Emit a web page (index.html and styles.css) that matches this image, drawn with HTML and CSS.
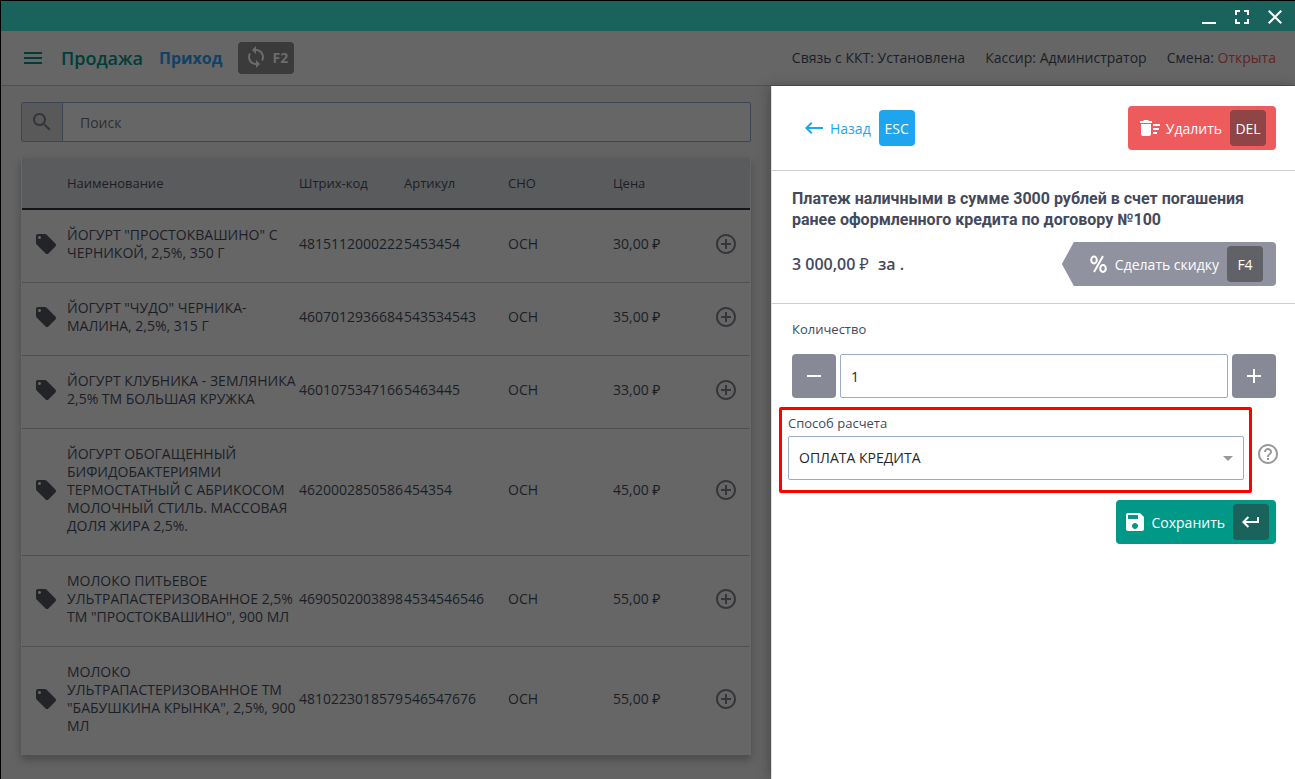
FILE: index.html
```html
<!DOCTYPE html>
<html lang="ru">
<head>
<meta charset="utf-8">
<title>Продажа</title>
<link rel="stylesheet" href="styles.css">
</head>
<body>
<svg class="sprite" aria-hidden="true">
  <symbol id="tag" viewBox="0 0 24 24"><path d="M21.41 11.58l-9-9C12.05 2.22 11.55 2 11 2H4c-1.1 0-2 .9-2 2v7c0 .55.22 1.05.59 1.42l9 9c.36.36.86.58 1.41.58.55 0 1.05-.22 1.41-.59l7-7c.37-.36.59-.86.59-1.41 0-.55-.23-1.06-.59-1.42zM5.500 7C4.670 7 4 6.330 4 5.500S4.670 4 5.500 4 7 4.670 7 5.500 6.330 7 5.500 7z"/></symbol>
  <symbol id="add" viewBox="0 0 24 24"><path d="M13 7h-2v4H7v2h4v4h2v-4h4v-2h-4V7zm-1-5C6.480 2 2 6.480 2 12s4.480 10 10 10 10-4.480 10-10S17.520 2 12 2zm0 18c-4.410 0-8-3.590-8-8s3.590-8 8-8 8 3.590 8 8-3.590 8-8 8z"/></symbol>
</svg>
<div class="titlebar">
  <button class="win-btn" aria-label="Свернуть"><svg class="glyph" viewBox="0 0 14 14"><path d="M0 12h14v2H0z"/></svg></button>
  <button class="win-btn" aria-label="Развернуть"><svg class="glyph" viewBox="0 0 14 14"><path d="M0 0h5v2H2v3H0zM9 0h5v5h-2V2H9zM0 9h2v3h3v2H0zM12 9h2v5H9v-2h3z"/></svg></button>
  <button class="win-btn" aria-label="Закрыть"><svg class="glyph" viewBox="0 0 14 14"><path d="M14 1.400L12.600 0 7 5.600 1.400 0 0 1.400 5.600 7 0 12.600 1.400 14 7 8.400l5.600 5.600 1.400-1.400L8.400 7z"/></svg></button>
</div>
<header class="topbar">
  <button class="menu" aria-label="Меню"><svg class="icon" viewBox="0 0 24 24"><path d="M3 18h18v-2H3v2zm0-5h18v-2H3v2zm0-7v2h18V6H3z"/></svg></button>
  <h1 class="page-name">Продажа</h1>
  <span class="mode">Приход</span>
  <button class="sync"><svg class="icon" viewBox="0 0 24 24"><path d="M12 4V1L8 5l4 4V6c3.310 0 6 2.690 6 6 0 1.010-.25 1.970-.7 2.800l1.460 1.460C19.540 15.030 20 13.570 20 12c0-4.420-3.580-8-8-8zm0 14c-3.310 0-6-2.690-6-6 0-1.010.25-1.970.7-2.800L5.240 7.740C4.460 8.970 4 10.430 4 12c0 4.420 3.580 8 8 8v3l4-4-4-4v3z"/></svg><span>F2</span></button>
  <div class="status">
    <span>Связь с ККТ: Установлена</span>
    <span>Кассир: Администратор</span>
    <span>Смена: <span class="open">Открыта</span></span>
  </div>
</header>
<div class="workspace">
  <main class="catalog">
    <div class="search">
      <label class="search-icon" for="search" aria-label="Поиск"><svg class="icon" viewBox="0 0 24 24"><path d="M15.500 14h-.79l-.28-.27C15.410 12.590 16 11.110 16 9.500 16 5.910 13.090 3 9.500 3S3 5.910 3 9.500 5.910 16 9.500 16c1.610 0 3.090-.59 4.230-1.570l.27.28v.79l5 4.990L20.490 19l-4.990-5zm-6 0C7.010 14 5 11.990 5 9.500S7.010 5 9.500 5 14 7.010 14 9.500 11.990 14 9.500 14z"/></svg></label>
      <input class="search-input" id="search" type="text" placeholder="Поиск">
    </div>
    <table class="goods">
      <colgroup><col class="c-tag"><col><col class="c-data"><col class="c-art"><col class="c-data"><col class="c-price"><col class="c-add"></colgroup>
      <thead><tr><th></th><th>Наименование</th><th>Штрих-код</th><th>Артикул</th><th>СНО</th><th>Цена</th><th></th></tr></thead>
      <tbody>
        <tr><td class="tag"><svg class="icon"><use href="#tag"/></svg></td><td>ЙОГУРТ "ПРОСТОКВАШИНО" С ЧЕРНИКОЙ, 2,5%, 350 Г</td><td>4815112000222</td><td>5453454</td><td>ОСН</td><td>30,00 ₽</td><td><button class="add" aria-label="Добавить"><svg class="icon"><use href="#add"/></svg></button></td></tr>
        <tr><td class="tag"><svg class="icon"><use href="#tag"/></svg></td><td>ЙОГУРТ "ЧУДО" ЧЕРНИКА-МАЛИНА, 2,5%, 315 Г</td><td>4607012936684</td><td>543534543</td><td>ОСН</td><td>35,00 ₽</td><td><button class="add" aria-label="Добавить"><svg class="icon"><use href="#add"/></svg></button></td></tr>
        <tr><td class="tag"><svg class="icon"><use href="#tag"/></svg></td><td>ЙОГУРТ КЛУБНИКА - ЗЕМЛЯНИКА 2,5% ТМ БОЛЬШАЯ КРУЖКА</td><td>4601075347166</td><td>5463445</td><td>ОСН</td><td>33,00 ₽</td><td><button class="add" aria-label="Добавить"><svg class="icon"><use href="#add"/></svg></button></td></tr>
        <tr><td class="tag"><svg class="icon"><use href="#tag"/></svg></td><td>ЙОГУРТ ОБОГАЩЕННЫЙ БИФИДОБАКТЕРИЯМИ ТЕРМОСТАТНЫЙ С АБРИКОСОМ МОЛОЧНЫЙ СТИЛЬ. МАССОВАЯ ДОЛЯ ЖИРА 2,5%.</td><td>4620002850586</td><td>454354</td><td>ОСН</td><td>45,00 ₽</td><td><button class="add" aria-label="Добавить"><svg class="icon"><use href="#add"/></svg></button></td></tr>
        <tr><td class="tag"><svg class="icon"><use href="#tag"/></svg></td><td>МОЛОКО ПИТЬЕВОЕ УЛЬТРАПАСТЕРИЗОВАННОЕ 2,5% ТМ "ПРОСТОКВАШИНО", 900 МЛ</td><td>4690502003898</td><td>4534546546</td><td>ОСН</td><td>55,00 ₽</td><td><button class="add" aria-label="Добавить"><svg class="icon"><use href="#add"/></svg></button></td></tr>
        <tr><td class="tag"><svg class="icon"><use href="#tag"/></svg></td><td>МОЛОКО УЛЬТРАПАСТЕРИЗОВАННОЕ ТМ "БАБУШКИНА КРЫНКА", 2,5%, 900 МЛ</td><td>4810223018579</td><td>546547676</td><td>ОСН</td><td>55,00 ₽</td><td><button class="add" aria-label="Добавить"><svg class="icon"><use href="#add"/></svg></button></td></tr>
      </tbody>
    </table>
  </main>
  <aside class="drawer">
    <div class="actions">
      <button class="btn back"><svg class="icon" viewBox="0 0 24 24"><path d="M21 11H6.830l3.580-3.590L9 6l-6 6 6 6 1.410-1.410L6.830 13H21z"/></svg><span>Назад</span><kbd class="key">ESC</kbd></button>
      <button class="btn delete"><svg class="icon" viewBox="0 0 24 24"><path d="M15 16h4v2h-4zM15 8h7v2h-7zM15 12h6v2h-6zM3 18a2 2 0 0 0 2 2h6a2 2 0 0 0 2-2V8H3zM14 5h-3l-1-1H6L5 5H2v2h12z"/></svg><span>Удалить</span><kbd class="key">DEL</kbd></button>
    </div>
    <section class="item">
      <h2 class="item-name">Платеж наличными в сумме 3000 рублей в счет погашения ранее оформленного кредита по договору №100</h2>
      <div class="price-row">
        <p class="price"><span>3 000,00 <span class="ruble">₽</span></span><span>за .</span></p>
        <button class="btn discount"><svg class="percent" viewBox="0 0 17 20"><g fill="none" stroke="currentColor" stroke-width="2"><ellipse cx="4" cy="6" rx="2.800" ry="3.400"/><ellipse cx="13" cy="14.500" rx="2.800" ry="3.400"/><path d="M13 2L4 18"/></g></svg><span>Сделать скидку</span><kbd class="key">F4</kbd></button>
      </div>
    </section>
    <form class="form">
      <label class="label" for="qty">Количество</label>
      <div class="qty-row">
        <button class="step" type="button" aria-label="Меньше"><svg class="glyph" viewBox="0 0 14 14"><path d="M0 6h14v2H0z"/></svg></button>
        <input class="field qty" id="qty" type="text" value="1">
        <button class="step" type="button" aria-label="Больше"><svg class="glyph" viewBox="0 0 14 14"><path d="M6 0h2v6h6v2H8v6H6V8H0V6h6z"/></svg></button>
      </div>
      <div class="method-row">
        <div class="method">
          <label class="label" for="method">Способ расчета</label>
          <div class="select-wrap">
            <select class="field select" id="method"><option>ОПЛАТА КРЕДИТА</option></select>
            <svg class="caret" viewBox="0 0 10 5"><path d="M0 0h10L5 5z"/></svg>
          </div>
        </div>
        <button class="help" type="button" aria-label="Справка"><svg class="icon" viewBox="0 0 24 24"><path d="M11 18h2v-2h-2v2zm1-16C6.480 2 2 6.480 2 12s4.480 10 10 10 10-4.480 10-10S17.520 2 12 2zm0 18c-4.410 0-8-3.590-8-8s3.590-8 8-8 8 3.590 8 8-3.590 8-8 8zm0-14c-2.210 0-4 1.790-4 4h2c0-1.100.9-2 2-2s2 .9 2 2c0 2-3 1.750-3 5h2c0-2.250 3-2.500 3-5 0-2.210-1.790-4-4-4z"/></svg></button>
      </div>
      <button class="btn save" type="button"><svg class="icon" viewBox="0 0 24 24"><path d="M17 3H5c-1.110 0-2 .9-2 2v14c0 1.100.89 2 2 2h14c1.100 0 2-.9 2-2V7l-4-4zm-5 16c-1.660 0-3-1.340-3-3s1.340-3 3-3 3 1.340 3 3-1.340 3-3 3zm3-10H5V5h10v4z"/></svg><span>Сохранить</span><kbd class="key"><svg class="return" viewBox="0 0 18 12"><path d="M15 1v4H3.800l3.300-3.300L5.700.3 0 6l5.700 5.700 1.400-1.400L3.800 7H17V1z"/></svg></kbd></button>
    </form>
  </aside>
</div>
</body>
</html>
```
FILE: styles.css
```css
* { box-sizing: border-box; }
body {
  margin: 0;
  min-height: 100vh;
  display: flex;
  flex-direction: column;
  border-top: 1px solid #000;
  border-left: 1px solid #000;
  background: #636363;
  color: #1c1e26;
  font: 14px/18px "Open Sans", "Noto Sans", sans-serif;
}
button, input, select { font: inherit; color: inherit; margin: 0; }
button { border: 0; padding: 0; background: none; display: inline-flex; align-items: center; justify-content: center; cursor: pointer; }
svg { fill: currentColor; flex: none; display: block; }
.sprite { position: absolute; width: 0; height: 0; }
.icon { width: 24px; height: 24px; }
.glyph { width: 14px; height: 14px; }

.titlebar { height: 30px; display: flex; justify-content: flex-end; align-items: center; gap: 5px; padding: 2px 6px 0 0; background: #1a635c; color: #fff; }
.win-btn { width: 28px; height: 28px; }

.topbar { height: 55px; display: flex; align-items: center; padding: 0 19px 0 20px; background: #666; border-bottom: 1px solid #505050; }
.menu { color: #003d36; }
.page-name { margin: 0 16px; font-size: 18px; font-weight: 600; line-height: 24px; color: #003d36; }
.mode { margin-right: 16px; font-size: 16px; font-weight: 700; color: #0f4265; }
.sync { width: 56px; height: 32px; gap: 4px; border-radius: 4px; background: #3b3b3b; color: #6c6c6c; font-weight: 700; }
.sync .icon { margin-bottom: 2px; }
.status { margin-left: auto; display: flex; gap: 20px; }
.open { color: #5f2424; }

.workspace { flex: 1; display: flex; }
.catalog { flex: 1; min-width: 0; padding: 16px 20px 23px; }
.search { display: flex; height: 40px; margin-bottom: 16px; border: 1px solid #3d4454; border-radius: 2px; background: #666; }
.search-icon { width: 41px; display: flex; align-items: center; justify-content: center; background: #595959; border-right: 1px solid #3d4454; color: #35353b; }
.search-input { flex: 1; min-width: 0; border: 0; padding: 2px 17px 0; background: none; }
.search-input::placeholder { color: #2e2e2e; opacity: 1; }

.goods { width: 100%; table-layout: fixed; border-collapse: separate; border-spacing: 0; padding: 0 1px; background: #666; box-shadow: 0 4px 8px rgba(0, 0, 0, .25); }
.c-tag { width: 45px; }
.c-data { width: 105px; }
.c-art { width: 104px; }
.c-price { width: 90px; }
.c-add { width: 47px; }
.goods th { height: 52px; padding: 0; text-align: left; font-size: 13px; font-weight: 400; background: #5a5b5d; border-bottom: 2px solid #14151b; }
.goods td { padding: 16px 0 20px; vertical-align: middle; border-bottom: 1px solid #505050; white-space: nowrap; }
.goods td:nth-child(2) { white-space: normal; }
.goods .tag { padding-left: 12px; color: #232428; }
.add { display: flex; margin-left: 11px; color: #35353b; }

.drawer { width: 524px; padding-bottom: 24px; background: #fff; border-left: 1px solid #ddd; color: #444a5c; box-shadow: -2px 0 12px rgba(0, 0, 0, .25); }
.btn { height: 44px; border-radius: 4px; color: #fff; }
.btn span { padding-top: 2px; }
.key { min-width: 36px; height: 36px; display: flex; align-items: center; justify-content: center; border-radius: 4px; font: inherit; padding-top: 2px; }
.actions { display: flex; justify-content: space-between; padding: 20px 19px 20px 20px; border-bottom: 1px solid #ccc; }
.back { padding-left: 10px; color: #1ea5ee; }
.back span { margin: 0 8px 0 4px; }
.back .key { background: #1ea5ee; color: #fff; }
.delete { padding: 0 10px; background: #ed5b5d; }
.delete span { margin: 0 8px 0 4px; }
.delete .key { background: #8f4446; }

.item { padding: 17px 19px 17px 20px; border-bottom: 1px solid #ccc; }
.item-name { margin: 0 0 12px; font: 700 16px/21px Roboto, sans-serif; }
.price-row { display: flex; justify-content: space-between; align-items: center; }
.price { margin: 0; display: flex; gap: 9px; font-size: 16px; font-weight: 600; }
.ruble { font-weight: 400; }
.discount { padding: 0 13px 0 28px; background: #9192a0; clip-path: polygon(12px 0, 100% 0, 100% 100%, 12px 100%, 0 50%); }
.percent { width: 17px; height: 20px; }
.discount span { margin: 0 8px; }
.discount .key { background: #616268; }

.form { padding: 16px 19px 0 20px; display: flex; flex-direction: column; }
.label { display: block; font-size: 13px; }
.qty-row { display: flex; gap: 4px; margin: 16px 0 9px; }
.step { width: 44px; height: 44px; border-radius: 4px; background: #888996; color: #fff; }
.field { height: 44px; border: 1px solid #9dabcb; border-radius: 2px; padding: 0 10px; background: #fff; color: #26282f; }
.qty { flex: 1; min-width: 0; }
.method-row { display: flex; align-items: center; justify-content: space-between; margin: 0 -4px 7px -13px; }
.method { width: 473px; padding: 4px 5px 10px 6px; border: 3px solid #f00; border-radius: 2px; }
.select-wrap { display: grid; align-items: center; margin-top: 4px; }
.select { grid-area: 1 / 1; width: 100%; appearance: none; }
.caret { grid-area: 1 / 1; justify-self: end; width: 10px; height: 5px; margin-right: 11px; color: #999; pointer-events: none; }
.help { color: #999; padding-top: 8px; }
.save { align-self: flex-end; padding: 0 7px; background: #009887; }
.save span { margin: 0 8px 0 4px; }
.save .key { background: #1a635c; padding-top: 0; }
.return { width: 18px; height: 12px; }
```
